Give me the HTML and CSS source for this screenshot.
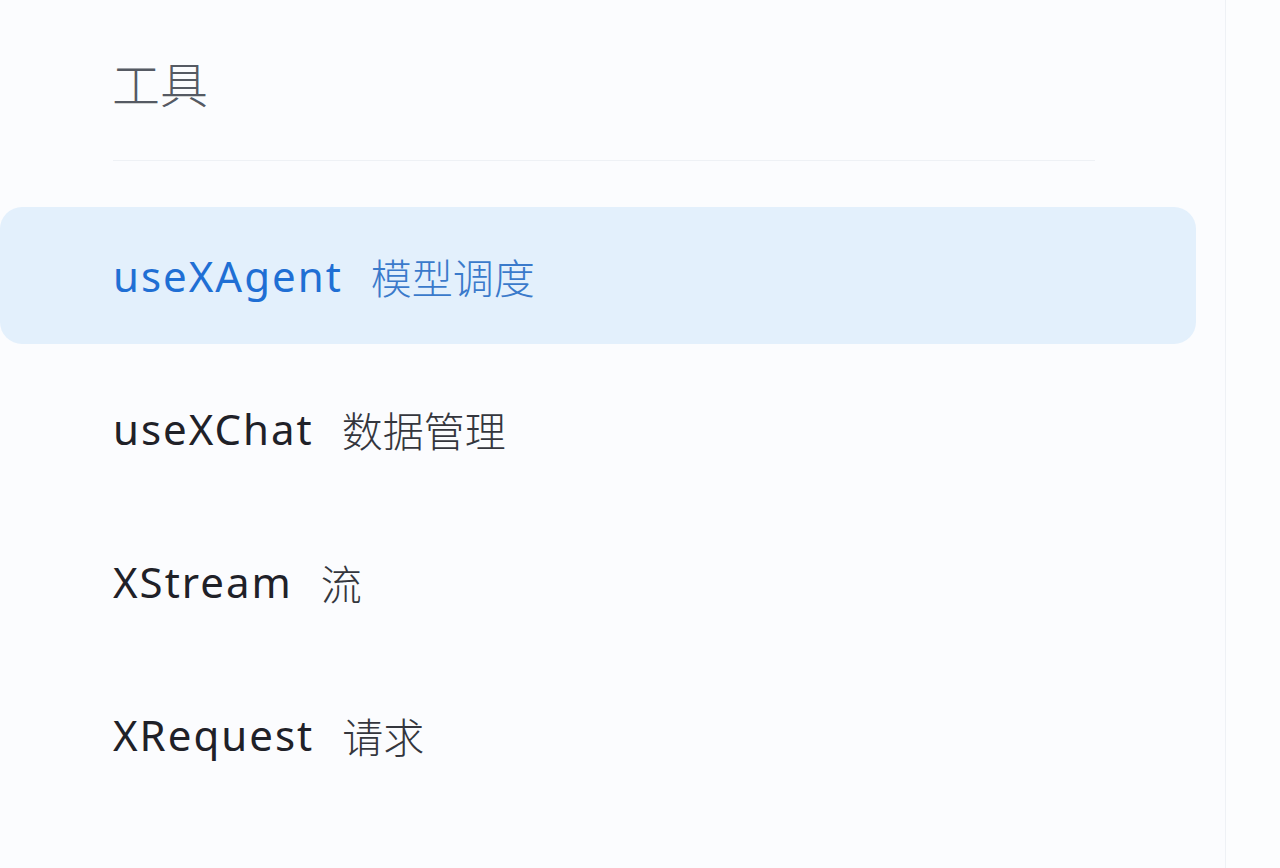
FILE: index.html
```html
<!DOCTYPE html>
<html lang="zh-CN">
<head>
<meta charset="utf-8">
<title>工具</title>
<link rel="stylesheet" href="styles.css">
</head>
<body>
<div class="page">
  <aside class="sidebar">
    <h2 class="group-title">工具</h2>
    <div class="divider"></div>
    <ul class="menu">
      <li class="item active"><span class="name">useXAgent</span><span class="desc">模型调度</span></li>
      <li class="item"><span class="name">useXChat</span><span class="desc">数据管理</span></li>
      <li class="item"><span class="name">XStream</span><span class="desc">流</span></li>
      <li class="item"><span class="name">XRequest</span><span class="desc">请求</span></li>
    </ul>
  </aside>
  <div class="rest"></div>
</div>
</body>
</html>
```
FILE: styles.css
```css
html, body {
  margin: 0;
  padding: 0;
  height: 100%;
}
body {
  background: #fbfcfe;
  font-family: "Noto Sans", "Noto Sans CJK SC", sans-serif;
  overflow: hidden;
}
.page {
  display: flex;
  height: 868px;
}
.sidebar {
  width: 1226px;
  border-right: 1px solid #eef1f5;
  box-sizing: border-box;
}
.rest {
  flex: 1;
  background: #fcfdfe;
}
.group-title {
  margin: 0;
  padding: 54px 0 0 112px;
  font-family: "Noto Sans CJK SC", sans-serif;
  font-weight: 300;
  font-size: 48px;
  line-height: 56px;
  color: #555a63;
}
.divider {
  margin: 50px 0 0 113px;
  width: 982px;
  height: 1px;
  background: #eef1f5;
}
.menu {
  list-style: none;
  margin: 46px 0 0 0;
  padding: 0;
  display: flex;
  flex-direction: column;
  gap: 16px;
}
.item {
  width: 1196px;
  height: 137px;
  box-sizing: border-box;
  padding-left: 113px;
  display: flex;
  align-items: center;
  gap: 28px;
  border-radius: 22px;
  color: #1f2128;
}
.item.active {
  background: #e3f0fc;
  color: #1f6fd4;
}
.name {
  font-family: "Noto Sans", sans-serif;
  font-size: 42px;
  font-weight: 400;
  letter-spacing: 2px;
}
.desc {
  font-family: "Noto Sans CJK SC", sans-serif;
  font-size: 41px;
  font-weight: 300;
  color: #34363d;
}
.item.active .desc {
  color: #3a7acb;
}
```
